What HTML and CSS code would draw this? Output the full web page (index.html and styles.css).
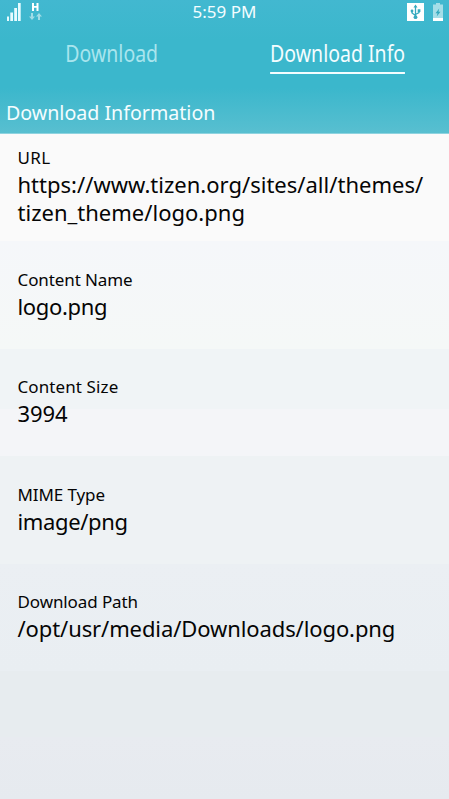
FILE: index.html
```html
<!DOCTYPE html>
<html lang="en">
<head>
<meta charset="utf-8">
<title>Download Info</title>
<link rel="stylesheet" href="styles.css">
</head>
<body>
<header class="header">
  <div class="status">
    <svg class="status-left" width="60" height="24" viewBox="0 0 60 24">
      <path fill="#e6fbff" d="M7 16.500h2V21H7zM10.300 12.500h2.700V21h-2.700zM14.200 8h2.800v13h-2.800zM18 3h2.700v18H18z"/>
      <path fill="#fff" d="M32 3h2v3h2.500V3h2v8h-2V7.700H34V11h-2z"/>
      <path fill="#a0dce6" d="M31 13h2v3.500h2L32 20l-3-3.500h2zM38 20h2v-3.500h2L39 13l-3 3.500h2z"/>
    </svg>
    <span class="clock">5:59 PM</span>
    <svg class="status-right" width="60" height="24" viewBox="389 0 60 24">
      <path fill="#fff" d="M407 3h17v18h-17z"/>
      <g fill="none" stroke="#35a9be" stroke-width="1.300"><path d="M415.500 6v11M412 11v2l3.500 2.500M419 10.500v2l-3.500 2"/></g>
      <g fill="#35a9be"><circle cx="415.500" cy="17.200" r="1.900"/><circle cx="412" cy="11" r="1.400"/><path d="M415.500 4.500l2 3h-4zM417.700 9.200h2.700v2.700h-2.700z"/></g>
      <path fill="#a5dee8" d="M436 3h4v1.500h3V18h-10V4.500h3z"/>
      <path fill="#fff" d="M433 18h10v3h-10z"/>
      <path fill="#35a9be" d="M439.200 8.500l-3.700 4.700h2l-.8 3.300 3.800-4.700h-2z"/>
    </svg>
  </div>
  <nav class="tabs">
    <div class="tab"><span class="tab-text tab-off">Download</span></div>
    <div class="tab"><span class="tab-text tab-on">Download Info</span></div>
  </nav>
  <h1 class="section">Download Information</h1>
</header>
<main class="list">
  <div class="row"><div class="label label-wide">URL</div><div class="value value-wide">https://www.tizen.org/sites/all/themes/<br>tizen_theme/logo.png</div></div>
  <div class="row"><div class="label">Content Name</div><div class="value value-tight">logo.png</div></div>
  <div class="row"><div class="label label-mid">Content Size</div><div class="value">3994</div></div>
  <div class="row"><div class="label">MIME Type</div><div class="value value-tight">image/png</div></div>
  <div class="row"><div class="label">Download Path</div><div class="value">/opt/usr/media/Downloads/logo.png</div></div>
</main>
</body>
</html>
```

FILE: styles.css
```css
* { box-sizing: border-box; }
body {
  margin: 0;
  height: 799px;
  overflow: hidden;
  font-family: "Noto Sans", sans-serif;
  color: #050505;
  background: linear-gradient(#fafafa 0 241px, #f5f7fa 241px, #f5f8f7 349px, #f0f4f6 349px 409px, #f4f5f8 409px 456px, #eef2f4 456px 564px, #ebeff3 564px, #e9eef2 671px, #e7ecef 671px 737px, #e8ebf0 737px, #e6eaef 799px);
}
.header {
  height: 134px;
  color: #f4fdff;
  background: linear-gradient(#42b8d0 0, #3bb7cc 40px, #3bb7cc 88px, #58bfd0 133px, #8ed3df 133px);
}
.status { display: flex; justify-content: space-between; height: 24px; }
.clock { font-size: 17px; line-height: 24px; }
.tabs { display: flex; height: 68px; }
.tab { flex: 1; text-align: center; padding-top: 14px; }
.tab:first-child { padding-right: 2px; }
.tab-text {
  display: inline-block;
  height: 36px;
  font-size: 23px;
  line-height: 31px;
  white-space: nowrap;
  transform: scaleX(.848);
}
.tab-off { color: #a9e5ee; }
.tab-on { border-bottom: 2.500px solid #f4fdff; }
.section {
  margin: 0 0 0 5.500px;
  font-size: 20.500px;
  line-height: 41px;
  font-weight: 400;
  transform: scaleX(.957);
  transform-origin: left;
}
.row {
  display: flex;
  flex-direction: column;
  justify-content: center;
  height: 107.600px;
  padding: 0 0 4px 17.500px;
}
.row:first-child { height: 107px; padding-bottom: 5px; }
.label { font-size: 17px; line-height: 27px; letter-spacing: -.1px; }
.label-wide { letter-spacing: .4px; }
.label-mid { letter-spacing: .1px; }
.value { font-size: 22px; line-height: 27.500px; letter-spacing: -.1px; white-space: nowrap; }
.value-wide { letter-spacing: .01px; }
.value-tight { letter-spacing: -.35px; }
```
